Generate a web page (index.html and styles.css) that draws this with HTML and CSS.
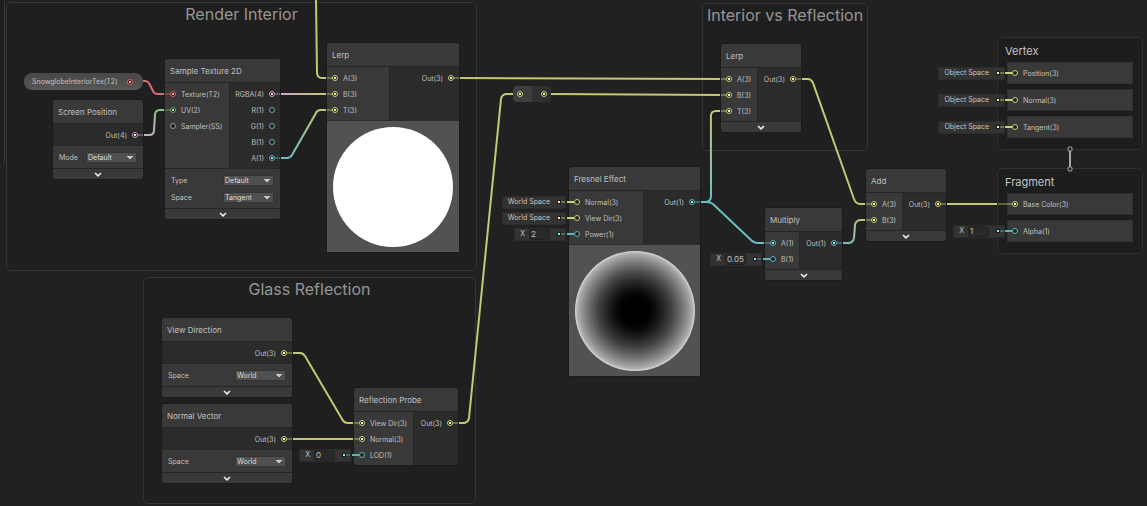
FILE: index.html
```html
<!DOCTYPE html>
<html lang="en">
<head>
<meta charset="utf-8">
<meta name="viewport" content="width=device-width, initial-scale=1">
<title>Shader Graph</title>
<link rel="stylesheet" href="styles.css">
</head>
<body>
<main class="graph">
  <div class="group g-edge"></div>
  <section class="group g-interior"><h2>Render Interior</h2></section>
  <section class="group g-glass"><h2>Glass Reflection</h2></section>
  <section class="group g-mix"><h2>Interior vs Reflection</h2></section>

  <svg class="wires" aria-hidden="true">
    <defs>
      <linearGradient id="g-uv" gradientUnits="userSpaceOnUse" x1="143" y1="135" x2="165" y2="110"><stop offset="0" stop-color="#c9aec6"/><stop offset="1" stop-color="#83c983"/></linearGradient>
      <linearGradient id="g-rgba" gradientUnits="userSpaceOnUse" x1="280" y1="94" x2="327" y2="94"><stop offset="0" stop-color="#d0a5ce"/><stop offset="1" stop-color="#c4c873"/></linearGradient>
      <linearGradient id="g-a" gradientUnits="userSpaceOnUse" x1="285" y1="158" x2="322" y2="110"><stop offset="0" stop-color="#6ac0c4"/><stop offset="1" stop-color="#c4c873"/></linearGradient>
      <linearGradient id="g-t" gradientUnits="userSpaceOnUse" x1="711" y1="202" x2="711" y2="111"><stop offset="0" stop-color="#6ac0c4"/><stop offset="1" stop-color="#c4c873"/></linearGradient>
      <linearGradient id="g-mul" gradientUnits="userSpaceOnUse" x1="842" y1="243" x2="866" y2="220"><stop offset="0" stop-color="#6ac0c4"/><stop offset="1" stop-color="#c4c873"/></linearGradient>
    </defs>
    <g class="wire">
      <path d="M316 0L317 72Q317 78 322 78H328"/>
      <path class="red" d="M143 81H145Q148 81 150 85L153 91Q154 94 158 94H165"/>
      <path stroke="url(#g-uv)" d="M143 135H149Q154 135 154 130L155 115Q155 110 160 110H165"/>
      <rect x="280" y="93" width="48" height="2" fill="url(#g-rgba)" stroke="none"/>
      <path stroke="url(#g-a)" d="M280 158H287Q290 158 292 155L316 113Q317 110 321 110H328"/>
      <path d="M459 78L721 79"/>
      <path d="M292 353H300Q303 353 305 356L342 419Q344 423 348 423H354"/>
      <path d="M292 439H354"/>
      <path d="M458 423H463Q468 423 469 418L501 99Q502 94 507 94H513"/>
      <path d="M551 94L721 95"/>
      <path class="cyan" d="M700 202H707Q710 202 713 204L751 240Q754 243 757 243H765"/>
      <path stroke="url(#g-t)" d="M705 202Q711 202 711 196L710.9 116Q711 111 716 111H721"/>
      <path d="M801 79H808Q811 79 813 83L854 199Q856 204 860 204H866"/>
      <path stroke="url(#g-mul)" d="M842 243H848Q853 243 854 238L855 225Q856 220 861 220H866"/>
      <path d="M946 204H1008"/>
    </g>
  </svg>

  <div class="pill red">SnowglobeInteriorTex(T2)<i class="dot on"></i></div>

  <article class="node n-screen">
    <h3>Screen Position</h3>
    <div class="ports"><div class="outs"><div class="port violet">Out(4)<i class="dot on"></i></div></div></div>
    <div class="options"><label>Mode<select><option>Default</option></select></label></div>
    <button class="fold" aria-label="Collapse"><svg viewBox="0 0 8 5"><path d="M1 1L4 3.8L7 1"/></svg></button>
  </article>

  <article class="node n-sample">
    <h3>Sample Texture 2D</h3>
    <div class="ports">
      <div class="ins">
        <div class="port red"><i class="dot on"></i>Texture(T2)</div>
        <div class="port green"><i class="dot on"></i>UV(2)</div>
        <div class="port grey"><i class="dot"></i>Sampler(SS)</div>
      </div>
      <div class="outs">
        <div class="port violet">RGBA(4)<i class="dot on"></i></div>
        <div class="port cyan">R(1)<i class="dot"></i></div>
        <div class="port cyan">G(1)<i class="dot"></i></div>
        <div class="port cyan">B(1)<i class="dot"></i></div>
        <div class="port cyan">A(1)<i class="dot on"></i></div>
      </div>
    </div>
    <div class="options">
      <label>Type<select><option>Default</option></select></label>
      <label>Space<select><option>Tangent</option></select></label>
    </div>
    <button class="fold" aria-label="Collapse"><svg viewBox="0 0 8 5"><path d="M1 1L4 3.8L7 1"/></svg></button>
  </article>

  <article class="node n-lerp">
    <h3>Lerp</h3>
    <div class="ports">
      <div class="ins">
        <div class="port"><i class="dot on"></i>A(3)</div>
        <div class="port"><i class="dot on"></i>B(3)</div>
        <div class="port"><i class="dot on"></i>T(3)</div>
      </div>
      <div class="outs"><div class="port">Out(3)<i class="dot on"></i></div></div>
    </div>
    <div class="preview"><div class="ball"></div></div>
  </article>

  <article class="node n-view">
    <h3>View Direction</h3>
    <div class="ports"><div class="outs"><div class="port">Out(3)<i class="dot on"></i></div></div></div>
    <div class="options"><label>Space<select><option>World</option></select></label></div>
    <button class="fold" aria-label="Collapse"><svg viewBox="0 0 8 5"><path d="M1 1L4 3.8L7 1"/></svg></button>
  </article>

  <article class="node n-normal">
    <h3>Normal Vector</h3>
    <div class="ports"><div class="outs"><div class="port">Out(3)<i class="dot on"></i></div></div></div>
    <div class="options"><label>Space<select><option>World</option></select></label></div>
    <button class="fold" aria-label="Collapse"><svg viewBox="0 0 8 5"><path d="M1 1L4 3.8L7 1"/></svg></button>
  </article>

  <article class="node n-probe">
    <h3>Reflection Probe</h3>
    <div class="ports">
      <div class="ins">
        <div class="port"><i class="dot on"></i>View Dir(3)</div>
        <div class="port"><i class="dot on"></i>Normal(3)</div>
        <div class="port cyan"><label class="feed">X<input type="text" value="0"><i class="pin"></i></label><i class="dot fed"></i>LOD(1)</div>
      </div>
      <div class="outs"><div class="port">Out(3)<i class="dot on"></i></div></div>
    </div>
  </article>

  <div class="redirect"><div class="half"><i class="dot on"></i></div><div class="half"><i class="dot on"></i></div></div>

  <article class="node n-fresnel">
    <h3>Fresnel Effect</h3>
    <div class="ports">
      <div class="ins">
        <div class="port"><span class="feed">World Space<i class="pin"></i></span><i class="dot fed"></i>Normal(3)</div>
        <div class="port"><span class="feed">World Space<i class="pin"></i></span><i class="dot fed"></i>View Dir(3)</div>
        <div class="port cyan"><label class="feed">X<input type="text" value="2"><i class="pin"></i></label><i class="dot fed"></i>Power(1)</div>
      </div>
      <div class="outs"><div class="port cyan">Out(1)<i class="dot on"></i></div></div>
    </div>
    <div class="preview"><div class="ball rim"></div></div>
  </article>

  <article class="node n-mix">
    <h3>Lerp</h3>
    <div class="ports">
      <div class="ins">
        <div class="port"><i class="dot on"></i>A(3)</div>
        <div class="port"><i class="dot on"></i>B(3)</div>
        <div class="port"><i class="dot on"></i>T(3)</div>
      </div>
      <div class="outs"><div class="port">Out(3)<i class="dot on"></i></div></div>
    </div>
    <button class="fold" aria-label="Collapse"><svg viewBox="0 0 8 5"><path d="M1 1L4 3.8L7 1"/></svg></button>
  </article>

  <article class="node n-multiply">
    <h3>Multiply</h3>
    <div class="ports">
      <div class="ins">
        <div class="port cyan"><i class="dot on"></i>A(1)</div>
        <div class="port cyan"><label class="feed">X<input type="text" value="0.05"><i class="pin"></i></label><i class="dot fed"></i>B(1)</div>
      </div>
      <div class="outs"><div class="port cyan">Out(1)<i class="dot on"></i></div></div>
    </div>
    <button class="fold" aria-label="Collapse"><svg viewBox="0 0 8 5"><path d="M1 1L4 3.8L7 1"/></svg></button>
  </article>

  <article class="node n-add">
    <h3>Add</h3>
    <div class="ports">
      <div class="ins">
        <div class="port"><i class="dot on"></i>A(3)</div>
        <div class="port"><i class="dot on"></i>B(3)</div>
      </div>
      <div class="outs"><div class="port">Out(3)<i class="dot on"></i></div></div>
    </div>
    <button class="fold" aria-label="Collapse"><svg viewBox="0 0 8 5"><path d="M1 1L4 3.8L7 1"/></svg></button>
  </article>

  <section class="stage s-vertex">
    <h2>Vertex</h2>
    <div class="port slot"><span class="feed">Object Space<i class="pin"></i></span><i class="dot fed"></i>Position(3)</div>
    <div class="port slot"><span class="feed">Object Space<i class="pin"></i></span><i class="dot fed"></i>Normal(3)</div>
    <div class="port slot"><span class="feed">Object Space<i class="pin"></i></span><i class="dot fed"></i>Tangent(3)</div>
  </section>
  <section class="stage s-fragment">
    <h2>Fragment</h2>
    <div class="port slot"><i class="dot on"></i>Base Color(3)</div>
    <div class="port slot cyan"><label class="feed">X<input type="text" value="1"><i class="pin"></i></label><i class="dot fed"></i>Alpha(1)</div>
  </section>
  <svg class="link" viewBox="0 0 8 28" aria-hidden="true"><path d="M4 6V22"/><rect x="2" y="2" width="4" height="4" rx="1"/><rect x="2" y="22" width="4" height="4" rx="1"/></svg>
</main>
</body>
</html>
```

FILE: styles.css
```css
* { box-sizing: border-box; }

body {
  margin: 0;
  background: #212121;
  color: #c0c0c0;
  font: 7px/16px Inter, "Liberation Sans", sans-serif;
}

h2, h3 { margin: 0; font-weight: 400; }

.graph {
  position: relative;
  min-height: 100vh;
  overflow: hidden;
}

/* Groups */
.group {
  position: absolute;
  border: 1px solid #353535;
  border-radius: 5px;
  background: #1f1f1f;
}
.group h2 {
  font-size: 16px;
  line-height: 22px;
  text-align: center;
  white-space: nowrap;
  color: #969696;
}
.g-edge { left: -20px; top: -20px; width: 25px; height: 187px; }
.g-interior { left: 6px; top: 2px; width: 471px; height: 269px; }
.g-glass { left: 143px; top: 277px; width: 333px; height: 227px; }
.g-mix { left: 702px; top: 3px; width: 166px; height: 148px; }

/* Wires */
.wires {
  position: absolute;
  inset: 0;
  width: 100%;
  height: 100%;
}
.wire {
  fill: none;
  stroke: #c4c873;
  stroke-width: 2;
}
.wire .red { stroke: #d66f6d; }
.wire .cyan { stroke: #6ac0c4; }

/* Ports */
.port {
  --tone: #cdd17a;
  --core: #f2f59a;
  position: relative;
  display: flex;
  align-items: center;
  gap: 5px;
  height: 16px;
  padding: 2px 5px 0;
  white-space: nowrap;
}
.port .dot, .port .feed { margin-bottom: 2px; }
.red { --tone: #d9605e; --core: #ff9c98; }
.green { --tone: #5fae5f; --core: #92e892; }
.violet { --tone: #c79cc6; --core: #fbcdf8; }
.cyan { --tone: #5fb4b8; --core: #86ecf0; }
.grey { --tone: #9a9a9a; }
.outs .port { justify-content: flex-end; padding-left: 0; }

.dot {
  position: relative;
  flex: none;
  width: 6px;
  height: 6px;
  border: 1px solid var(--tone);
  border-radius: 3px;
  background: #202020;
}
.dot.on::before {
  content: "";
  position: absolute;
  inset: 1px;
  background: var(--core);
}
.dot.on::after {
  content: "";
  position: absolute;
  top: 1px;
  right: 5px;
  width: 5px;
  height: 2px;
  background: var(--tone);
  opacity: 0.4;
}
.outs .dot.on::after { right: auto; left: 5px; }
.pill .dot.on::after, .redirect .dot.on::after { display: none; }
.dot.fed::before {
  content: "";
  position: absolute;
  top: 1px;
  right: 5px;
  width: 7px;
  height: 2px;
  background: var(--tone);
}

.feed {
  position: absolute;
  right: calc(100% + 3px);
  display: flex;
  align-items: center;
  height: 13px;
  padding: 0 4px 0 5px;
  border: 1px solid #2c2c2c;
  background: #333;
  color: #c4c4c4;
}
.feed input {
  width: 21px;
  height: 11px;
  margin-left: 4px;
  padding: 0 1px;
  border: 1px solid #222;
  border-radius: 2px;
  background: #292929;
  color: #c0c0c0;
  font: inherit;
  font-size: 8px;
}
.pin {
  position: relative;
  flex: none;
  width: 4px;
  height: 4px;
  margin-left: 7px;
  border: 1px solid #1a1a1a;
  background: var(--core);
}
.pin::after {
  content: "";
  position: absolute;
  left: 3px;
  top: 0;
  width: 4px;
  height: 2px;
  background: var(--tone);
  opacity: 0.4;
}

/* Nodes */
.node {
  position: absolute;
  border-radius: 2px;
  background: #393939;
  box-shadow: 0 0 0 1px #1b1b1b;
}
.node h3 {
  height: 24px;
  padding-left: 5px;
  border-bottom: 1px solid #262626;
  font-size: 8px;
  line-height: 24px;
}
.ports { display: flex; }
.ins, .outs { padding: 3px 0 2px; }
.ins { flex: none; }
.outs { flex: 1; min-width: 0; background: #2b2b2b; border-left: 1px solid #262626; }
.options {
  padding: 3px 6px 2px;
  border-top: 1px solid #262626;
}
.options label {
  display: flex;
  justify-content: space-between;
  align-items: center;
  height: 17px;
}
.options select {
  appearance: none;
  width: 51px;
  height: 11px;
  padding: 0 1px;
  border: 1px solid #333;
  border-radius: 1px;
  background-color: #505050;
  background-image:
    linear-gradient(to bottom right, #c8c8c8 50%, transparent 51%),
    linear-gradient(to bottom left, #c8c8c8 50%, transparent 51%);
  background-repeat: no-repeat;
  background-size: 3px 3px;
  background-position: right 3px center, right 6px center;
  color: #dcdcdc;
  font: inherit;
  line-height: 9px;
}
.fold {
  display: flex;
  justify-content: center;
  align-items: center;
  width: 100%;
  height: 11px;
  padding: 0;
  border: 0;
  border-top: 1px solid #262626;
  background: none;
}
.fold svg { width: 8px; height: 5px; fill: none; stroke: #eee; stroke-width: 1.6; }

.preview {
  display: grid;
  place-items: center;
  height: 132px;
  border-top: 1px solid #2c2c2c;
  background: #525252;
}
.ball { width: 120px; height: 120px; border-radius: 50%; background: #fff; }
.rim {
  background: radial-gradient(circle closest-side, #000 0%, #000 22%, #0a0a0a 32%, #202020 45%, #404040 60%, #5a5a5a 70%, #787878 80%, #999 90%, #b0b0b0 96%, #dcdcdc 100%);
}

.n-screen { left: 53px; top: 100px; width: 90px; }
.n-sample { left: 165px; top: 59px; width: 115px; }
.n-sample .ins { width: 64px; }
.n-lerp { left: 327px; top: 43px; width: 132px; }
.n-lerp .ins { width: 62px; }
.n-view { left: 162px; top: 318px; width: 130px; }
.n-normal { left: 162px; top: 404px; width: 130px; }
.n-probe { left: 354px; top: 388px; width: 104px; }
.n-probe .ins { width: 59px; }
.n-fresnel { left: 569px; top: 167px; width: 131px; }
.n-fresnel .ins { width: 74px; }
.n-mix { left: 721px; top: 44px; width: 80px; }
.n-mix .ins { width: 36px; }
.n-multiply { left: 765px; top: 208px; width: 77px; }
.n-multiply .ins { width: 34px; }
.n-add { left: 866px; top: 169px; width: 80px; }
.n-add .ins { width: 36px; }

.pill {
  position: absolute;
  left: 24px;
  top: 73px;
  display: flex;
  align-items: center;
  justify-content: space-between;
  width: 119px;
  height: 17px;
  padding: 0 10px 0 8px;
  border-radius: 8px;
  background: linear-gradient(#484848, #565656);
}

.redirect {
  position: absolute;
  left: 513px;
  top: 86px;
  display: flex;
  width: 38px;
  height: 16px;
  border-radius: 4px;
  overflow: hidden;
}
.half {
  --tone: #cdd17a;
  --core: #f2f59a;
  flex: 1;
  display: flex;
  align-items: center;
  padding: 0 4px;
  background: #3e3e3e;
}
.half + .half { justify-content: flex-end; background: #303030; }

/* Master stack */
.stage {
  position: absolute;
  left: 997px;
  display: flex;
  flex-direction: column;
  gap: 5px;
  width: 146px;
  padding: 0 9px 11px;
  border: 1px solid #303030;
  border-radius: 6px;
  background: rgba(27, 27, 27, 0.6);
}
.stage h2 {
  height: 19px;
  margin-left: -2px;
  font-size: 11px;
  line-height: 26px;
  color: #c4c4c4;
}
.slot {
  height: 22px;
  padding-left: 4px;
  background: #393939;
  border: 1px solid #303030;
}
.s-vertex { top: 37px; }
.s-fragment { top: 168px; }

.link {
  position: absolute;
  left: 1066px;
  top: 145px;
  width: 8px;
  height: 28px;
  fill: #212121;
  stroke: #a8a8a8;
}
.link path { stroke-width: 2; }
```
